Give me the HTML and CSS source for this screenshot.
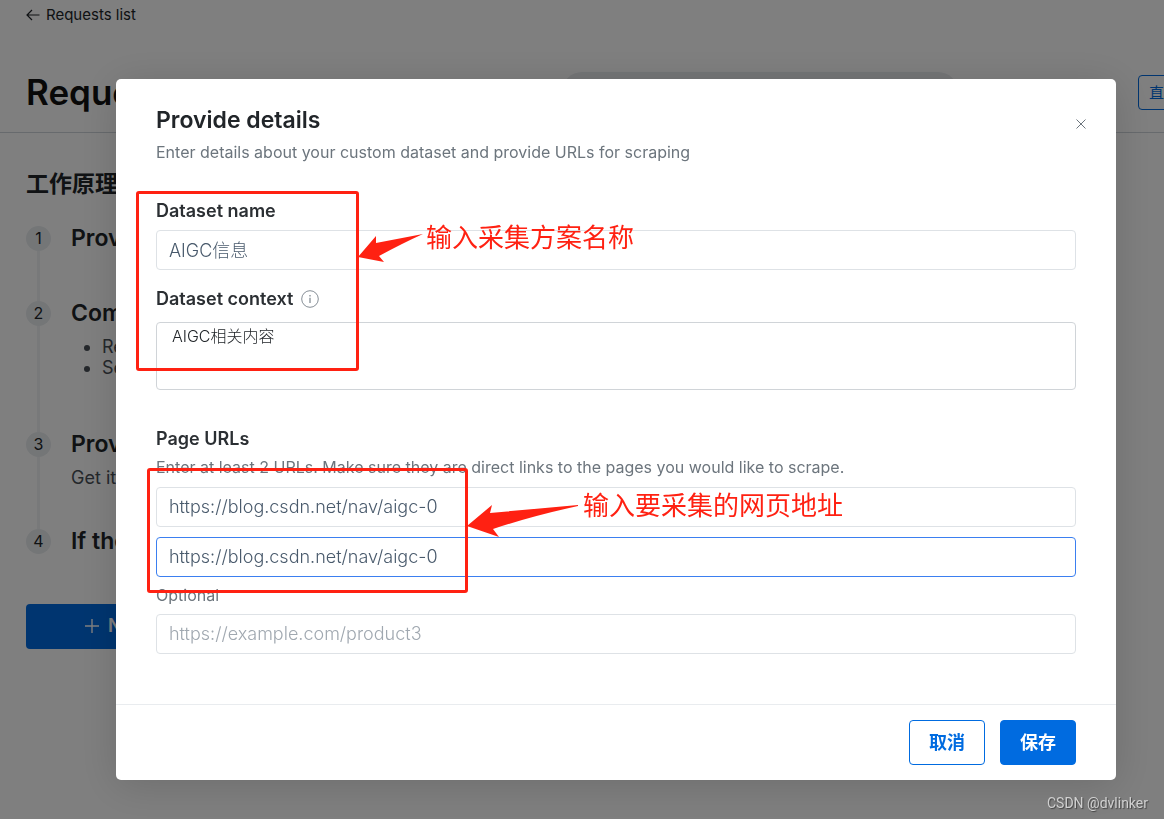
FILE: index.html
```
<!DOCTYPE html>
<html lang="en">
<head>
  <meta charset="UTF-8">
  <title>Requests list</title>
  <link rel="stylesheet" href="styles.css">
</head>
<body>

<div class="page">
  <header class="page-header">
    <a class="back-link" href="#">
      <svg width="14" height="12" viewBox="0 0 14 12" fill="none" stroke="currentColor" stroke-width="1.2"><path d="M13.500 6H1M6 1 1 6l5 5"/></svg>
      <span>Requests list</span>
    </a>
    <div class="title-row">
      <h1>Requests</h1>
      <div class="header-pill"></div>
      <button class="header-button" type="button">直</button>
    </div>
  </header>

  <main class="how">
    <h2>工作原理</h2>
    <ol class="steps">
      <li class="step">
        <span class="step-number">1</span>
        <h3>Provide</h3>
      </li>
      <li class="step step-tall">
        <span class="step-number">2</span>
        <div>
          <h3>Com</h3>
          <ul>
            <li>Re</li>
            <li>Se</li>
          </ul>
        </div>
      </li>
      <li class="step step-medium">
        <span class="step-number">3</span>
        <div>
          <h3>Provide</h3>
          <p>Get it</p>
        </div>
      </li>
      <li class="step">
        <span class="step-number">4</span>
        <h3>If the</h3>
      </li>
    </ol>
    <button class="new-button" type="button">
      <svg width="16" height="16" viewBox="0 0 16 16" fill="none" stroke="currentColor" stroke-width="1.4"><path d="M8 1v14M1 8h14"/></svg>
      <span>New</span>
    </button>
  </main>
</div>

<div class="overlay">
  <form class="modal" role="dialog" aria-labelledby="modal-title">
    <div class="modal-body">
      <div class="modal-head">
        <div>
          <h2 id="modal-title">Provide details</h2>
          <p class="subtitle">Enter details about your custom dataset and provide URLs for scraping</p>
        </div>
        <button class="close" type="button" aria-label="Close">
          <svg width="10" height="10" viewBox="0 0 10 10" fill="none" stroke="currentColor" stroke-width="1"><path d="M.5.5l9 9M9.500.5l-9 9"/></svg>
        </button>
      </div>

      <div class="field">
        <label for="name">Dataset name</label>
        <input id="name" type="text" value="AIGC信息">
      </div>

      <div class="field">
        <div class="label-row">
          <label for="context">Dataset context</label>
          <svg width="18" height="18" viewBox="0 0 18 18" fill="none" stroke="#868e96"><circle cx="9" cy="9" r="8.300"/><path d="M9 7.800v5.200M9 5v1.500" stroke-width="1.300"/></svg>
        </div>
        <textarea id="context">AIGC相关内容</textarea>
      </div>

      <div class="urls">
        <label for="url1">Page URLs</label>
        <p class="hint">Enter at least 2 URLs. Make sure they are direct links to the pages you would like to scrape.</p>
        <input id="url1" type="text" value="https://blog.csdn.net/nav/aigc-0">
        <input id="url2" class="active" type="text" value="https://blog.csdn.net/nav/aigc-0" aria-label="Second URL">
        <label class="optional" for="url3">Optional</label>
        <input id="url3" type="text" placeholder="https://example.com/product3">
      </div>
    </div>

    <footer class="modal-footer">
      <button class="btn btn-outline" type="button">取消</button>
      <button class="btn btn-primary" type="submit">保存</button>
    </footer>

    <!-- Red notes over the form -->
    <div class="mark mark-dataset"></div>
    <div class="mark mark-urls"></div>
    <div class="note note-dataset">
      <svg width="66" height="28" viewBox="0 0 66 28" fill="#ff2112"><path d="M0 23 18 2v7L65 0Q45 9 21 22l5 6z"/></svg>
      <span>输入采集方案名称</span>
    </div>
    <div class="note note-urls">
      <svg width="112" height="34" viewBox="0 0 112 34" fill="#ff2112"><path d="M0 22 25 1l-2 8L111 1v1Q65 12 26 25l6 8z"/></svg>
      <span>输入要采集的网页地址</span>
    </div>
  </form>
</div>

<div class="watermark">CSDN @dvlinker</div>

</body>
</html>
```
FILE: styles.css
```
* {
  box-sizing: border-box;
}

body {
  margin: 0;
  font-family: Inter, "Noto Sans CJK SC", sans-serif;
  font-size: 16px;
  color: #212529;
  background: #fff;
}

h1, h2, h3, p, ul, ol {
  margin: 0;
  padding: 0;
}

button, input, textarea {
  font-family: inherit;
}

.page {
  height: 100vh;
  overflow: hidden;
}

.page-header {
  padding: 5px 0 20px 26px;
  border-bottom: 1px solid #ced4da;
}

.back-link {
  display: flex;
  align-items: center;
  gap: 6px;
  font-size: 15px;
  line-height: 20px;
  color: #212529;
  text-decoration: none;
}

.title-row {
  display: flex;
  align-items: center;
  margin-top: 47px;
  margin-right: -54px;
}

h1 {
  flex: 1;
  font-size: 35px;
  line-height: 40px;
  font-weight: 600;
  color: #111;
}

.header-pill {
  width: 396px;
  height: 40px;
  margin-right: 180px;
  border-radius: 20px;
  background: #e9ecef;
}

.header-button {
  width: 80px;
  height: 35px;
  padding: 0 10px 2px;
  border: 1px solid #006be0;
  border-radius: 4px;
  background: none;
  color: #006be0;
  font-size: 15px;
  text-align: left;
}

.how {
  padding: 35px 26px;
}

.how h2 {
  font-size: 23px;
  line-height: 32px;
  font-weight: 700;
}

.steps {
  margin-top: 26px;
  list-style: none;
}

.step {
  position: relative;
  display: flex;
  gap: 20px;
  min-height: 75px;
}

.step-tall {
  min-height: 131px;
}

.step-medium {
  min-height: 97px;
}

/* line between the numbers */
.step:not(:last-child)::before {
  content: "";
  position: absolute;
  top: 25px;
  bottom: 0;
  left: 11px;
  width: 3px;
  background: #f1f3f5;
}

.step-number {
  flex: none;
  width: 25px;
  height: 25px;
  border-radius: 50%;
  background: #e9ecef;
  font-size: 16px;
  line-height: 25px;
  text-align: center;
}

.step h3 {
  font-size: 23px;
  line-height: 25px;
  font-weight: 600;
}

.step ul {
  margin-top: 10px;
  padding-left: 31px;
  list-style: disc;
  color: #495057;
}

.step ul li {
  font-size: 18px;
  line-height: 21px;
}

.step p {
  margin-top: 10px;
  font-size: 18px;
  line-height: 22px;
  color: #495057;
}

.new-button {
  display: flex;
  align-items: center;
  gap: 8px;
  width: 220px;
  height: 45px;
  padding: 0 58px 2px;
  border: 0;
  border-radius: 4px;
  background: #006be0;
  color: #fff;
  font-size: 18px;
  font-weight: 600;
}

.overlay {
  position: fixed;
  inset: 0;
  padding: 79px 48px 39px 116px;
  background: rgba(0, 0, 0, 0.5);
}

.modal {
  position: relative;
  border-radius: 5px;
  background: #fff;
  box-shadow: 0 5px 40px rgba(0, 0, 0, 0.15);
}

.modal-body {
  padding: 26px 40px 50px;
}

.modal-head {
  display: flex;
  justify-content: space-between;
}

.modal-head h2 {
  font-size: 23px;
  line-height: 30px;
  font-weight: 600;
}

.subtitle,
.hint,
.optional {
  color: #6c757d;
}

.subtitle {
  margin-top: 7px;
  line-height: 20px;
}

.close {
  align-self: flex-start;
  display: flex;
  margin: 8px -18px 0 0;
  padding: 6px 8px;
  border: 0;
  background: none;
  color: #6c757d;
}

label {
  display: block;
  font-size: 18px;
  line-height: 20px;
  font-weight: 600;
  color: #2b2f33;
}

.field {
  margin-top: 19px;
}

.modal-head + .field {
  margin-top: 39px;
}

.label-row {
  display: flex;
  align-items: center;
  gap: 8px;
}

input,
textarea {
  display: block;
  width: 100%;
  border: 1px solid #dee2e6;
  border-radius: 4px;
  background: #fff;
}

input {
  height: 40px;
  padding: 0 12px 2px;
  color: #495a6c;
  font-size: 18px;
  font-weight: 300;
}

input::placeholder {
  color: #a0a8b0;
}

.field input {
  margin-top: 9px;
}

textarea {
  height: 68px;
  margin-top: 13px;
  padding: 2px 15px;
  border-color: #d0d4d8;
  color: #212529;
  font-size: 16px;
  line-height: 22px;
  font-weight: 300;
  resize: none;
}

.urls {
  margin-top: 39px;
}

.hint {
  margin: 8px 0 10px;
  line-height: 20px;
}

input.active {
  margin-top: 10px;
  border-color: #3b7ff0;
}

.optional {
  margin: 8px 0 9px;
  font-size: 16px;
  font-weight: 400;
  color: #6c757d;
}

.modal-footer {
  display: flex;
  justify-content: flex-end;
  gap: 15px;
  padding: 15px 40px;
  border-top: 1px solid #e9ecef;
}

.btn {
  height: 45px;
  padding: 0 19px 4px;
  border: 1px solid #006be0;
  border-radius: 4px;
  font-size: 18px;
  font-weight: 700;
}

.btn-outline {
  background: #fff;
  color: #006be0;
}

.btn-primary {
  background: #006be0;
  color: #fff;
}

.mark {
  position: absolute;
  border: 3px solid #ff2112;
  border-radius: 3px;
  pointer-events: none;
}

.mark-dataset {
  top: 112px;
  left: 20px;
  width: 223px;
  height: 180px;
}

.mark-urls {
  top: 389px;
  left: 31px;
  width: 321px;
  height: 125px;
}

.note {
  position: absolute;
  display: flex;
  align-items: flex-start;
  color: #ff2112;
  font-family: "Noto Sans CJK SC", sans-serif;
  font-size: 26px;
  line-height: 30px;
  pointer-events: none;
}

.note-dataset {
  top: 142px;
  left: 242px;
  gap: 2px;
}

.note-dataset svg {
  margin-top: 13px;
}

.note-urls {
  top: 410px;
  left: 351px;
  gap: 4px;
}

.note-urls svg {
  margin-top: 15px;
}

.watermark {
  position: fixed;
  right: 16px;
  bottom: 7px;
  color: #d0d0d0;
  font-family: Roboto, sans-serif;
  font-size: 14px;
  line-height: 18px;
  text-shadow: 1px 1px 1px #444;
}
```
